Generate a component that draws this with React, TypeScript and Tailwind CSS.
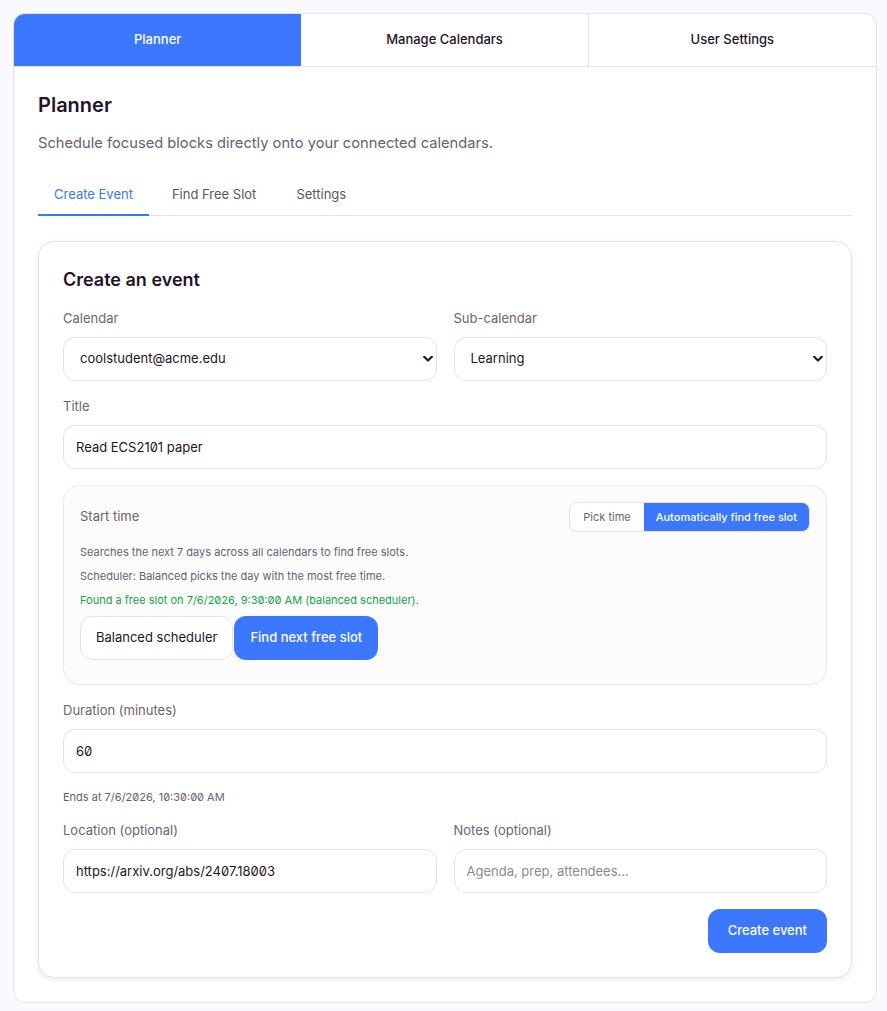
import React from "react";

const font = "font-['Inter','Liberation_Sans',sans-serif] [font-feature-settings:'zero']";

function Chevron() {
  return (
    <svg className="pointer-events-none absolute right-[4px] top-1/2 -translate-y-1/2" width="10" height="7" viewBox="0 0 10 7">
      <path d="M1.2 1.3 L5 5 L8.8 1.3" fill="none" stroke="#241630" strokeWidth="2.2" strokeLinecap="round" strokeLinejoin="round" />
    </svg>
  );
}

function Select({ value }: { value: string }) {
  return (
    <div className="relative">
      <select
        defaultValue={value}
        className="h-[44px] w-full appearance-none rounded-[12px] border border-[#e4e3e8] bg-white pl-4 pr-6 text-[13px] text-[#1f1429] outline-none"
      >
        <option>{value}</option>
      </select>
      <Chevron />
    </div>
  );
}

function Label({ children }: { children: React.ReactNode }) {
  return <div className="mb-[10px] text-[13px] leading-[18px] text-[#6e6373]">{children}</div>;
}

function Input({ value, placeholder }: { value?: string; placeholder?: string }) {
  return (
    <input
      defaultValue={value}
      placeholder={placeholder}
      className="h-[44px] w-full rounded-[12px] border border-[#e4e3e8] bg-white px-3 text-[13px] text-[#1f1429] outline-none placeholder:text-[#8f8794]"
    />
  );
}

export default function App() {
  return (
    <div className={`${font} min-h-[1011px] bg-[#f9f9fe] pt-[13px] pl-[13px] pr-[10px] pb-[8px]`}>
      <div className="overflow-hidden rounded-[12px] border border-[#e2e2e8] bg-white">
        <div className="grid h-[53px] grid-cols-3 border-b border-[#e4e4ea] text-[13px]">
          <div className="flex items-center justify-center bg-[#3b78ff] font-medium text-white">Planner</div>
          <div className="flex items-center justify-center border-r border-[#e4e4ea] font-medium text-[#1f1429]">Manage Calendars</div>
          <div className="flex items-center justify-center font-medium text-[#1f1429]">User Settings</div>
        </div>

        <div className="px-[24px] pb-[24px]">
          <h1 className="mt-[26px] text-[20px] font-semibold leading-[24px] text-[#1f1429]">Planner</h1>
          <p className="mt-[16px] text-[14.7px] leading-[20px] text-[#6b6070]">
            Schedule focused blocks directly onto your connected calendars.
          </p>

          <div className="mt-[21px] flex border-b border-[#e4e4ea] text-[13px]">
            <div className="-mb-px border-b-2 border-[#3b78ff] px-4 pt-[10px] pb-[10px] leading-[20px] text-[#3b78ff]">Create Event</div>
            <div className="px-[23px] pt-[10px] pb-[10px] leading-[20px] text-[#5e5363]">Find Free Slot</div>
            <div className="px-[17px] pt-[10px] pb-[10px] leading-[20px] text-[#5e5363]">Settings</div>
          </div>

          <div className="mt-[25px] rounded-[16px] border border-[#e4e3e8] bg-white p-[24px] shadow-[0_2px_6px_rgba(0,0,0,0.08)]">
            <h2 className="mt-[2px] text-[18px] font-semibold leading-[24px] text-[#1f1429]">Create an event</h2>

            <div className="mt-[17px] grid grid-cols-2 gap-x-[17px]">
              <div>
                <Label>Calendar</Label>
                <Select value="coolstudent@acme.edu" />
              </div>
              <div>
                <Label>Sub-calendar</Label>
                <Select value="Learning" />
              </div>
            </div>

            <div className="mt-[16px]">
              <Label>Title</Label>
              <Input value="Read ECS2101 paper" />
            </div>

            <div className="mt-[16px] rounded-[16px] border border-[#ebeaee] bg-[#fcfcfd] px-[16px] pt-[16px] pb-[24px]">
              <div className="flex items-center justify-between">
                <span className="text-[13px] text-[#6e6373]">Start time</span>
                <div className="flex h-[30px] overflow-hidden rounded-[8px] border border-[#e4e3e8] bg-white text-[11px]">
                  <div className="flex items-center px-[13px] text-[#6e6373]">Pick time</div>
                  <div className="flex items-center bg-[#3b78ff] px-[12px] font-medium text-white">Automatically find free slot</div>
                </div>
              </div>
              <div className="mt-[12px] flex flex-col gap-[8px] text-[11px] leading-[16px]">
                <p className="text-[#6b6070]">Searches the next 7 days across all calendars to find free slots.</p>
                <p className="text-[#6b6070]">Scheduler: Balanced picks the day with the most free time.</p>
                <p className="text-[#17a34a]">Found a free slot on 7/6/2026, 9:30:00 AM (balanced scheduler).</p>
              </div>
              <div className="mt-[8px] flex gap-px">
                <button className="h-[44px] rounded-[12px] border border-[#e4e3e8] bg-white px-[15px] text-[13px] font-normal text-[#1f1429]">
                  Balanced scheduler
                </button>
                <button className="h-[44px] rounded-[12px] bg-[#3b78ff] px-[16px] text-[13px] font-medium text-white">
                  Find next free slot
                </button>
              </div>
            </div>

            <div className="mt-[16px]">
              <Label>Duration (minutes)</Label>
              <Input value="60" />
              <p className="mt-[16px] text-[11px] leading-[16px] text-[#6b6070]">Ends at 7/6/2026, 10:30:00 AM</p>
            </div>

            <div className="mt-[16px] grid grid-cols-2 gap-x-[17px]">
              <div>
                <Label>Location (optional)</Label>
                <Input value="https://arxiv.org/abs/2407.18003" />
              </div>
              <div>
                <Label>Notes (optional)</Label>
                <Input placeholder="Agenda, prep, attendees..." />
              </div>
            </div>

            <div className="mt-[16px] flex justify-end">
              <button className="h-[44px] rounded-[12px] bg-[#3b78ff] px-[20px] text-[13px] font-medium text-white">Create event</button>
            </div>
          </div>
        </div>
      </div>
    </div>
  );
}
